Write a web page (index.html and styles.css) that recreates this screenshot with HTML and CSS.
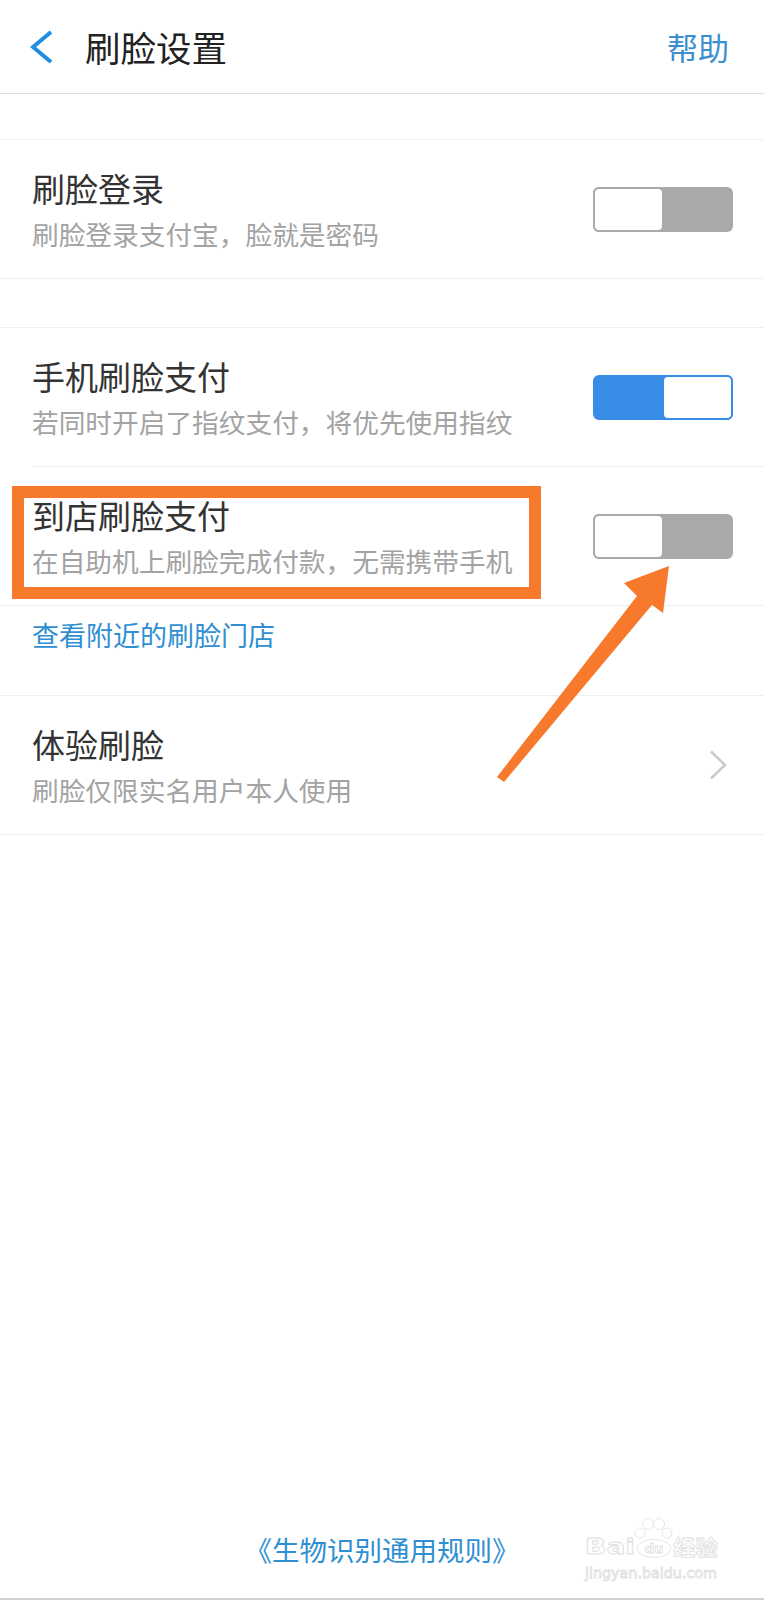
FILE: index.html
```html
<!DOCTYPE html>
<html lang="zh-CN">
<head>
<meta charset="utf-8">
<title>刷脸设置</title>
<link rel="stylesheet" href="styles.css">
</head>
<body>
<div class="page">
  <header class="nav">
    <svg class="nav-back" width="24" height="34" viewBox="0 0 24 34"><polyline points="21,2 3,17 21,32" fill="none" stroke="#1f8de0" stroke-width="4" stroke-linejoin="miter" stroke-linecap="butt"/></svg>
    <h1 class="nav-title">刷脸设置</h1>
    <span class="nav-help">帮助</span>
  </header>

  <div class="spacer"></div>

  <section class="group">
    <div class="row">
      <div class="row-text">
        <div class="row-title">刷脸登录</div>
        <div class="row-sub">刷脸登录支付宝，脸就是密码</div>
      </div>
      <div class="switch"><span class="knob"></span></div>
    </div>
  </section>

  <div class="spacer spacer-b"></div>

  <section class="group">
    <div class="row">
      <div class="row-text">
        <div class="row-title">手机刷脸支付</div>
        <div class="row-sub">若同时开启了指纹支付，将优先使用指纹</div>
      </div>
      <div class="switch switch-on"><span class="knob"></span></div>
    </div>
    <div class="divider-inset"></div>
    <div class="row">
      <div class="row-text">
        <div class="row-title">到店刷脸支付</div>
        <div class="row-sub">在自助机上刷脸完成付款，无需携带手机</div>
      </div>
      <div class="switch"><span class="knob"></span></div>
    </div>
    <div class="divider"></div>
    <div class="link-row"><span class="link">查看附近的刷脸门店</span></div>
    <div class="divider"></div>
    <div class="row">
      <div class="row-text">
        <div class="row-title">体验刷脸</div>
        <div class="row-sub">刷脸仅限实名用户本人使用</div>
      </div>
      <svg class="row-arrow" width="20" height="30" viewBox="0 0 20 30"><polyline points="3,1.5 17,15 3,28.5" fill="none" stroke="#c9c9c9" stroke-width="2.5"/></svg>
    </div>
  </section>

  <footer class="footer"><span class="footer-link">《生物识别通用规则》</span></footer>
  <div class="bottom-bar"></div>

  <div class="highlight-box"></div>
  <svg class="arrow" width="764" height="1600" viewBox="0 0 764 1600"><polygon points="497,777 637,596 624,583 669,566 663,613 652,605 504,782" fill="#f7792b"/></svg>

  <svg class="watermark" width="140" height="75" viewBox="0 0 140 75">
    <g fill="#fff" stroke="#dedede" stroke-width="0.8">
      <text x="3" y="42" class="wm-bai" textLength="50" lengthAdjust="spacingAndGlyphs">Bai</text>
      <circle cx="58" cy="21" r="5"/>
      <circle cx="66" cy="12" r="5.5"/>
      <circle cx="77" cy="12" r="5.5"/>
      <circle cx="85" cy="21" r="5"/>
      <ellipse cx="72" cy="36.5" rx="17" ry="9"/>
      <text x="72" y="41" class="wm-du" text-anchor="middle">du</text>
      <text x="91" y="43" class="wm-jy" textLength="45" lengthAdjust="spacingAndGlyphs">经验</text>
      <text x="3" y="66" class="wm-url" textLength="132" lengthAdjust="spacingAndGlyphs">jingyan.baidu.com</text>
    </g>
  </svg>
</div>
</body>
</html>
```

FILE: styles.css
```css
* { box-sizing: border-box; }

html, body {
  margin: 0;
  padding: 0;
  background: #ffffff;
}

body {
  font-family: "Noto Sans CJK SC", "Noto Sans", sans-serif;
  color: #333333;
}

.page {
  position: relative;
  width: 764px;
  height: 1600px;
  display: flex;
  flex-direction: column;
  overflow: hidden;
}

/* navigation bar */
.nav {
  height: 94px;
  flex: none;
  display: flex;
  align-items: center;
  padding: 0 35px 0 30px;
  border-bottom: 1px solid #dcdcdc;
}

.nav-back { flex: none; }

.nav-title {
  margin: 0 0 0 31px;
  font-size: 35.5px;
  font-weight: 400;
  line-height: 44px;
  color: #222222;
  flex: 1;
}

.nav-help {
  font-size: 31px;
  line-height: 40px;
  color: #3a8fd0;
}

.spacer { height: 45px; flex: none; }
.spacer-b { height: 48px; }

.group {
  flex: none;
  border-top: 1px solid #efefef;
  border-bottom: 1px solid #efefef;
}

.row {
  height: 138px;
  display: flex;
  align-items: center;
  justify-content: space-between;
  padding: 0 31px 0 32px;
}

.row-text {
  display: flex;
  flex-direction: column;
}

.row-title {
  font-size: 33px;
  line-height: 40px;
  color: #333333;
}

.row-sub {
  margin-top: 9px;
  font-size: 26.7px;
  line-height: 34px;
  color: #a3a3a3;
}

.switch {
  flex: none;
  width: 140px;
  height: 45px;
  border-radius: 6px;
  background: #a8a9a8;
  display: flex;
  justify-content: flex-start;
}

.switch .knob {
  width: 71px;
  height: 45px;
  background: #ffffff;
  border: 2px solid #a8a9a8;
  border-radius: 6px;
}

.switch-on {
  background: #3a8de6;
  justify-content: flex-end;
}

.switch-on .knob { border-color: #3a8de6; }

.row-arrow { flex: none; margin-right: 5px; }

.divider-inset {
  height: 1px;
  margin-left: 32px;
  background: #efefef;
}

.divider {
  height: 1px;
  background: #efefef;
}

.link-row {
  height: 89px;
  padding: 12px 32px 0;
}

.link {
  font-size: 27px;
  line-height: 34px;
  color: #2f8fd2;
}

.footer {
  margin-top: auto;
  height: 34px;
  margin-bottom: 32px;
  display: flex;
  justify-content: center;
}

.footer-link {
  font-size: 27.5px;
  line-height: 34px;
  color: #2f8fd2;
}

.bottom-bar {
  height: 2px;
  background: #cfcfcf;
  flex: none;
}

/* annotation overlays */
.highlight-box {
  position: absolute;
  left: 12px;
  top: 486px;
  width: 529px;
  height: 113px;
  border: 12px solid #f7792b;
  pointer-events: none;
}

.arrow {
  position: absolute;
  left: 0;
  top: 0;
  pointer-events: none;
}

.watermark {
  position: absolute;
  left: 582px;
  top: 1512px;
  pointer-events: none;
}

.wm-bai {
  font-family: "DejaVu Sans", sans-serif;
  font-weight: bold;
  font-size: 22px;
}

.wm-du {
  font-family: "DejaVu Sans", sans-serif;
  font-weight: bold;
  font-size: 13px;
}

.wm-jy {
  font-family: "Noto Sans CJK SC", sans-serif;
  font-weight: bold;
  font-size: 21px;
}

.wm-url {
  font-family: "DejaVu Sans", sans-serif;
  font-size: 14px;
}
```
